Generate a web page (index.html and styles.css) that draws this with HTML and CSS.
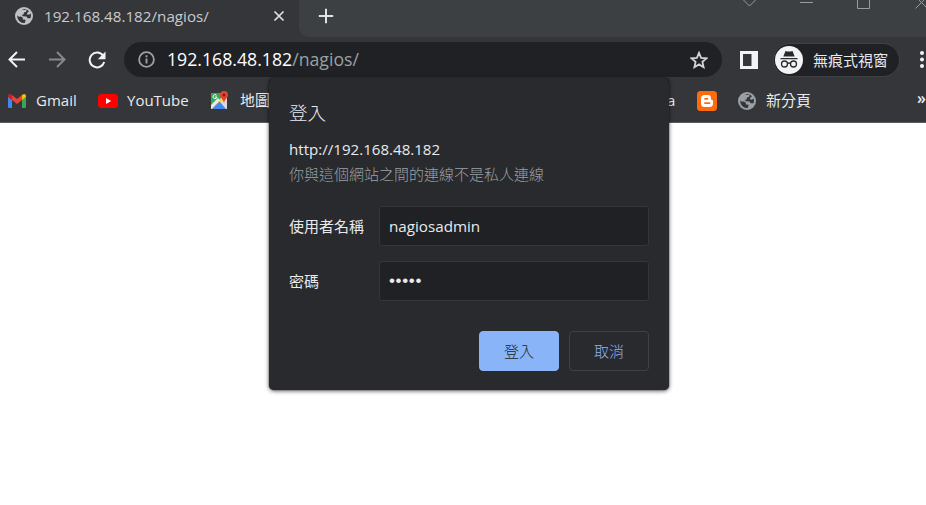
FILE: index.html
```html
<!DOCTYPE html>
<html lang="zh-Hant">
<head>
<meta charset="utf-8">
<title>192.168.48.182/nagios/</title>
<link rel="stylesheet" href="styles.css">
</head>
<body>
<svg width="0" height="0" class="defs"><defs>
<symbol id="globe" viewBox="0 0 18 18"><circle cx="9" cy="9" r="9" fill="currentColor"/><path d="M2.200 7.300C2.200 9.500 3.500 9.800 5.500 9.600L7.500 10.200 8 12.500 10.700 12.700 9.800 15.900Q7.500 16.500 5 14.700 2 12.500 2.200 7.300ZM6.800 2.500Q9.500 1.600 11.600 2.500L11.200 4.700 9 5.600 8.500 7.400 6.700 8 8 9.300 11.500 9.500 12.700 11.300 15.500 11.200Q16.300 9 15.800 6.500L13.800 7.800 11.700 7.200 12.700 5.300 14.100 4.200Q11 1.200 6.800 2.500Z" fill="#35363a"/></symbol>
</defs></svg>
<header class="tabs">
  <div class="tab">
    <svg class="favicon" width="18" height="18"><use href="#globe"/></svg>
    <span class="tab-title">192.168.48.182/nagios/</span>
    <svg class="tab-close" width="12" height="12" viewBox="0 0 12 12"><path d="M1.500 1.500l9 9M10.500 1.500l-9 9" stroke="#dfe1e4" stroke-width="1.700"/></svg>
  </div>
  <div class="strip">
    <svg width="16" height="16" viewBox="0 0 16 16"><path d="M8 .8v14.400M.8 8h14.400" stroke="#dfe1e4" stroke-width="2"/></svg>
    <svg class="window-buttons" width="184" height="14" viewBox="0 0 184 14" fill="none" stroke="#9a9c9f"><path d="M1.500 0l6 6 6-6M58 2.500h13M115.500-4v12.500h12V-4M173.500-3.500l12 12M173.500 8.500l12-12"/></svg>
  </div>
</header>
<nav class="toolbar">
  <svg class="back" width="18" height="18" viewBox="0 0 18 18" fill="none" stroke="#f1f3f4" stroke-width="2"><path d="M17 8.500H2M9 1L1.500 8.500 9 16"/></svg>
  <svg class="forward" width="18" height="18" viewBox="0 0 18 18" fill="none" stroke="#87898c" stroke-width="2"><path d="M1 8.500h15M9 1L16.500 8.500 9 16"/></svg>
  <svg class="reload" width="18" height="18" viewBox="0 0 18 18"><path d="M15 4.500A7.400 7.400 0 1 0 16.200 11" fill="none" stroke="#f1f3f4" stroke-width="2"/><path d="M17.500.5v7.700H9.800z" fill="#f1f3f4"/></svg>
  <div class="address">
    <svg width="17" height="17" viewBox="0 0 17 17"><circle cx="8.500" cy="8.500" r="7.400" fill="none" stroke="#9aa0a6" stroke-width="1.800"/><path d="M8.500 7.500v5M8.500 4.200v2" stroke="#9aa0a6" stroke-width="1.900"/></svg>
    <span class="url">192.168.48.182<span class="path">/nagios/</span></span>
    <svg class="star" width="18" height="18" viewBox="0 0 18 18"><path d="M9 1.800l2.100 5 5.400.5-4.100 3.600 1.200 5.300L9 13.400l-4.600 2.800 1.200-5.300-4.100-3.600 5.400-.5z" fill="none" stroke="#d2d4d6" stroke-width="1.800"/></svg>
  </div>
  <svg class="panel" width="18" height="18" viewBox="0 0 18 18"><path d="M0 0h18v18H0zM3 3v12h8.500V3z" fill="#f1f3f4" fill-rule="evenodd"/></svg>
  <div class="incognito">
    <svg width="28" height="28" viewBox="0 0 28 28"><circle cx="14" cy="14" r="14" fill="#f1f3f4"/><path d="M8.300 10.500L10.500 5q3.500 1.200 7 0l2.200 5.500zM5.500 12h17v1.300h-17z" fill="#292a2d"/><g fill="none" stroke="#292a2d" stroke-width="1.300"><circle cx="9.500" cy="18" r="3"/><circle cx="18.500" cy="18" r="3"/><path d="M12.500 17.500q1.500-1 3 0"/></g></svg>
    <span>無痕式視窗</span>
  </div>
  <svg class="more" width="4" height="18" viewBox="0 0 4 18" fill="#f1f3f4"><circle cx="2" cy="2" r="2"/><circle cx="2" cy="8.500" r="2"/><circle cx="2" cy="15" r="2"/></svg>
</nav>
<nav class="bookmarks">
  <svg class="gmail" width="18" height="14" viewBox="0 0 18 14"><path d="M0 2.500l4 3V14H1q-1 0-1-1z" fill="#4285f4"/><path d="M14 5.500l4-3V13q0 1-1 1h-3z" fill="#34a853"/><path d="M4 1l5 4 5-4v5L9 10 4 6z" fill="#ea4335"/><path d="M0 2q0-2 2-2l2 1v5L0 3z" fill="#c5221f"/><path d="M14 1l2-1q2 0 2 2v1l-4 3z" fill="#fbbc04"/></svg>
  <span class="gmail-label">Gmail</span>
  <svg class="youtube" width="20" height="14" viewBox="0 0 20 14"><rect width="20" height="14" rx="3.500" fill="red"/><path d="M8 4l5.200 3L8 10z" fill="#fff"/></svg>
  <span class="youtube-label">YouTube</span>
  <svg class="maps" width="19" height="19" viewBox="0 0 19 19"><path d="M1 2h16v16H1z" fill="#34a853"/><path d="M17 3v15H15L9 11z" fill="#d8dce1"/><path d="M1 17L14 4l3 3L4 18H1z" fill="#fbd44c"/><path d="M2 18l7.500-7.500L16 18z" fill="#4285f4"/><path d="M1 14l7-7 2 2-9 9z" fill="#e8eaed"/><path d="M6.500 4.300A2 2 0 1 0 7 6H5" stroke="#fff" fill="none"/><path d="M14 0a4 4 0 0 1 4 4c0 3-4 4.500-4 9 0-4.500-4-6-4-9a4 4 0 0 1 4-4z" fill="#e74335"/><circle cx="14" cy="4" r="1.500" fill="#811b17"/></svg>
  <span class="maps-label">地圖</span>
  <span class="clipped">a</span>
  <svg class="blogger" width="20" height="20" viewBox="0 0 20 20"><rect width="20" height="20" rx="3.500" fill="#ff6a0b"/><path d="M7.500 4H11q3 0 3 3v1q0 1 1 1t1 1v2.500q0 3.500-3.500 3.500h-5Q4 16 4 12.500v-5Q4 4 7.500 4z" fill="#fff"/><path d="M8 7.800h2.500M8 12.200h4.500" stroke="#ff6a0b" stroke-width="1.700" stroke-linecap="round"/></svg>
  <svg class="newpage" width="18" height="18"><use href="#globe"/></svg>
  <span class="newpage-label">新分頁</span>
  <span class="overflow">»</span>
</nav>
<main></main>
<form class="dialog">
  <h1>登入</h1>
  <p class="origin">http://192.168.48.182</p>
  <p class="notice">你與這個網站之間的連線不是私人連線</p>
  <div class="row"><span class="label">使用者名稱</span><div class="field">nagiosadmin</div></div>
  <div class="row"><span class="label">密碼</span><div class="field password">•••••</div></div>
  <div class="actions"><button type="button" class="primary">登入</button><button type="button">取消</button></div>
</form>
</body>
</html>
```
FILE: styles.css
```css
* { box-sizing: border-box; }
body { margin: 0; width: 926px; height: 505px; overflow: hidden; position: relative; background: #fff; color: #e8eaed; font: 15px/20px "Open Sans", "Noto Sans CJK TC", sans-serif; }
svg { display: block; flex: none; }
span { white-space: nowrap; }
.defs { position: absolute; }
.tabs { display: flex; height: 37px; background: #35363a; }
.tab { display: flex; align-items: center; width: 299px; height: 32px; padding-left: 15px; }
.favicon { color: #bdc1c6; }
.tab-title { width: 176px; margin-left: 11px; font-size: 15.2px; color: #c8cacd; }
.tab-close { margin-left: 53px; }
.strip { display: flex; flex: 1; height: 37px; background: #3c4043; border-bottom-left-radius: 10px; padding: 8px 0 0 19px; overflow: hidden; }
.window-buttons { margin: -8px 0 0 408px; }
.toolbar { display: flex; align-items: center; height: 45px; background: #35363a; padding-left: 8px; }
.forward { margin-left: 22px; }
.reload { margin-left: 22px; }
.address { display: flex; align-items: center; width: 598px; height: 35px; margin-left: 18px; padding: 0 14px; border-radius: 18px; background: #202124; }
.url { margin: 0 0 1px 12px; font-size: 17.7px; color: #fff; }
.path { color: #9aa0a6; }
.star { margin-left: auto; }
.panel { margin-left: 18px; }
.incognito { display: flex; align-items: center; gap: 10px; width: 127px; height: 34px; margin-left: 15px; padding-left: 1px; border: 1px solid #3f4145; border-radius: 17px; background: #202124; }
.more { margin-left: 20px; }
.bookmarks { display: flex; align-items: center; height: 41px; padding: 0 0 3px 8px; background: #35363a; border-bottom: 1px solid #5b5c5f; }
.bookmarks span { padding-bottom: 2px; }
.gmail-label { width: 41px; margin-left: 10px; }
.youtube { margin-left: 21px; }
.youtube-label { width: 61px; margin-left: 9px; }
.maps { margin-left: 22px; }
.maps-label { width: 30px; margin-left: 11px; }
.clipped { width: 9px; margin-left: 397px; }
.blogger { margin-left: 21px; }
.newpage { margin-left: 21px; color: #9aa0a6; }
.newpage-label { width: 45px; margin-left: 10px; }
.overflow { margin: 0 0 3px 106px; font-size: 16px; font-weight: 600; }
.dialog { position: absolute; left: 269px; top: 78px; width: 400px; height: 312px; padding: 21px 20px 20px; border-radius: 5px; background: #292a2d; box-shadow: 0 1px 4px rgba(0,0,0,.65), 0 0 1px #000; }
h1, p { margin: 0; font-weight: 300; }
h1 { font-size: 18.5px; line-height: 27px; }
.origin { margin-top: 12px; line-height: 22px; font-weight: 400; font-size: 15.1px; }
.notice { margin-top: 3px; line-height: 22px; color: #9aa0a6; }
.row { display: flex; align-items: center; height: 40px; margin-bottom: 15px; }
.notice + .row { margin-top: 21px; }
.label { width: 90px; }
.field { width: 270px; height: 40px; padding: 0 9px; border: 1px solid #35363a; border-radius: 3px; background: #202124; font-size: 15.2px; line-height: 38px; }
.password { font: 17px/38px "Liberation Sans", sans-serif; letter-spacing: .65px; }
.actions { display: flex; gap: 10px; justify-content: flex-end; margin-top: 30px; }
button { width: 80px; height: 40px; padding: 0 0 2px; border: 1px solid #3f4145; border-radius: 4px; background: transparent; color: #8ab4f8; font: 300 15px "Open Sans", "Noto Sans CJK TC", sans-serif; }
.primary { border-color: #8ab4f8; background: #8ab4f8; color: #202124; }
```
